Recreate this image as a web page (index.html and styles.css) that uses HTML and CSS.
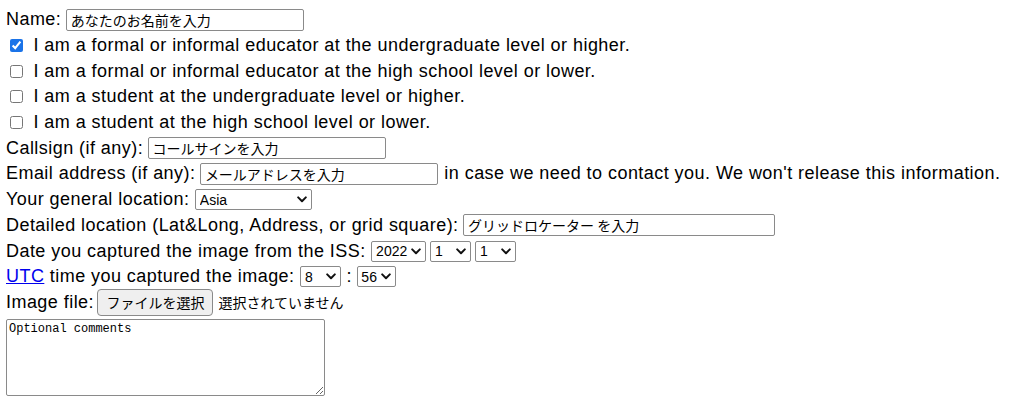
FILE: index.html
```html
<!DOCTYPE html>
<html lang="ja">
<head>
<meta charset="utf-8">
<link rel="stylesheet" href="styles.css">
</head>
<body>
<form class="form">
  <div class="row">Name: <input class="txt w-name" type="text" value="あなたのお名前を入力"></div>
  <div class="row"><input class="cb" type="checkbox" checked> I am a formal or informal educator at the undergraduate level or higher.</div>
  <div class="row"><input class="cb" type="checkbox"> I am a formal or informal educator at the high school level or lower.</div>
  <div class="row"><input class="cb" type="checkbox"> I am a student at the undergraduate level or higher.</div>
  <div class="row"><input class="cb" type="checkbox"> I am a student at the high school level or lower.</div>
  <div class="row">Callsign (if any): <input class="txt w-name" type="text" value="コールサインを入力"></div>
  <div class="row">Email address (if any): <input class="txt w-name" type="text" value="メールアドレスを入力"> in case we need to contact you. We won't release this information.</div>
  <div class="row">Your general location: <select class="sel w-loc"><option>Asia</option></select></div>
  <div class="row">Detailed location (Lat&amp;Long, Address, or grid square): <input class="txt w-det" type="text" value="グリッドロケーター を入力"></div>
  <div class="row">Date you captured the image from the ISS: <select class="sel w-year"><option>2022</option></select><select class="sel w-day gap"><option>1</option></select><select class="sel w-day gap"><option>1</option></select></div>
  <div class="row"><a class="link" href="#">UTC</a> time you captured the image: <select class="sel w-day"><option>8</option></select> : <select class="sel w-min"><option>56</option></select></div>
  <div class="row">Image file: <button type="button" class="btn">ファイルを選択</button><span class="small">選択されていません</span></div>
  <textarea class="comments">Optional comments</textarea>
</form>
</body>
</html>
```
FILE: styles.css
```css
body {
  margin: 0;
  padding: 7px 6px 0;
  font-family: "Liberation Sans", Arial, "Noto Sans CJK JP", sans-serif;
  font-size: 18px;
  letter-spacing: 0.45px;
  color: #000;
  background: #fff;
}
.form {
  display: block;
}
.row {
  height: 25.7px;
  display: flex;
  align-items: center;
  white-space: pre;
}
.txt {
  box-sizing: border-box;
  height: 22px;
  margin: 0 1px 0 -1px;
  padding: 1px 4px;
  border: 1px solid #8a8a8a;
  border-radius: 2px;
  font-family: "Noto Sans CJK JP", sans-serif;
  font-size: 14px;
  letter-spacing: 0;
  color: #000;
  background: #fff;
}
.w-name { width: 238px; }
.w-det { width: 312px; }
.sel {
  -webkit-appearance: none;
  appearance: none;
  box-sizing: border-box;
  height: 21px;
  margin: 0;
  padding: 0 14px 0 4px;
  border: 1px solid #8a8a8a;
  border-radius: 2px;
  font-family: "Liberation Sans", Arial, sans-serif;
  font-size: 14px;
  letter-spacing: 0;
  color: #000;
  background: #fff url("data:image/svg+xml,%3Csvg xmlns='http://www.w3.org/2000/svg' width='10' height='7' viewBox='0 0 10 7'%3E%3Cpath d='M1.2 1.4 L5 5.2 L8.8 1.4' fill='none' stroke='%23111' stroke-width='2' stroke-linecap='round' stroke-linejoin='round'/%3E%3C/svg%3E") no-repeat right 4px center;
}
.gap { margin-left: 4px; }
.w-loc { width: 117px; }
.w-year { width: 55px; }
.w-day { width: 41px; }
.w-min { width: 39px; padding-left: 3px; }
.cb {
  width: 13px;
  height: 13px;
  margin: 0 5px 0 4px;
  accent-color: #1a73e8;
}
.link {
  color: #0000ee;
  text-decoration: underline;
}
.btn {
  box-sizing: border-box;
  width: 116px;
  height: 27px;
  margin: 0 0 0 -2px;
  padding: 0 6px;
  border: 1px solid #8a8a8a;
  border-radius: 4px;
  background: #efefef;
  font-family: "Noto Sans CJK JP", sans-serif;
  font-size: 14px;
  letter-spacing: 0;
  color: #000;
}
.small {
  margin-left: 5px;
  font-family: "Noto Sans CJK JP", sans-serif;
  font-size: 14px;
  letter-spacing: 0;
}
.comments {
  display: block;
  box-sizing: border-box;
  width: 319px;
  height: 77px;
  margin: 4px 0 0;
  padding: 2px;
  border: 1px solid #8a8a8a;
  border-radius: 2px;
  font-family: "Liberation Mono", "DejaVu Sans Mono", monospace;
  font-size: 12px;
  letter-spacing: 0;
  resize: both;
}
```
